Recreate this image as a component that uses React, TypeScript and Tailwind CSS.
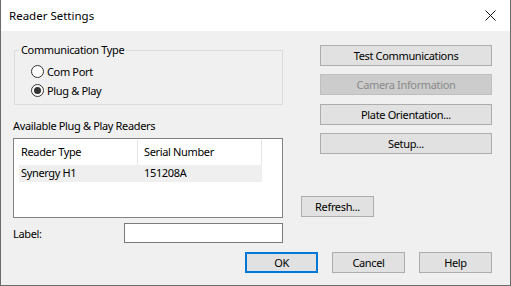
import React from "react";

const font = { fontFamily: '"Noto Sans", "Segoe UI", sans-serif' };

function Btn({ children, className = "", disabled = false }: { children: React.ReactNode; className?: string; disabled?: boolean }) {
  return (
    <div
      className={
        "flex h-[21px] items-center justify-center border text-[11px] leading-none tracking-[-0.35px] " +
        (disabled
          ? "border-[#bfbfbf] bg-[#cccccc] text-[#8a8a8a] "
          : "border-[#adadad] bg-[#e1e1e1] text-black ") +
        className
      }
    >
      {children}
    </div>
  );
}

function Radio({ checked, label }: { checked?: boolean; label: string }) {
  return (
    <div className="flex h-[19px] items-center gap-[3px]">
      <div className="flex h-[13px] w-[13px] items-center justify-center rounded-full border border-[#333333] bg-white">
        {checked && <div className="h-[7px] w-[7px] rounded-full bg-[#333333]" />}
      </div>
      <span className="text-[11px] leading-none tracking-[-0.35px]">{label}</span>
    </div>
  );
}

export default function App() {
  return (
    <div style={font} className="flex h-[286px] w-[511px] flex-col border-x border-b border-[#6b6b6b] bg-[#f0f0f0] text-black">
      <div className="flex h-[31px] items-center justify-between bg-white pl-[8px] pr-[10px]">
        <span className="text-[11.5px] leading-none">Reader Settings</span>
        <svg width="11" height="11" viewBox="0 0 11 11" className="mr-[4px]">
          <path d="M0.5 0.5 L10.5 10.5 M10.5 0.5 L0.5 10.5" stroke="#111" strokeWidth="1" />
        </svg>
      </div>
      <div className="flex flex-col text-[11px] tracking-[-0.35px]">
        <div className="flex">
          <div className="ml-[12px] flex w-[270px] flex-col">
            <fieldset className="ml-[1px] mt-[11px] h-[63px] border border-[#dcdcdc]">
              <legend className="ml-[4px] px-[2px] text-[11px] leading-[16px]">Communication Type</legend>
              <div className="pb-[3px] pl-[16px] pt-[4px]">
                <Radio label="Com Port" />
                <Radio label="Plug & Play" checked />
              </div>
            </fieldset>
            <div className="mt-[13px] leading-[16px]">Available Plug &amp; Play Readers</div>
            <div className="mt-[4px] h-[80px] border border-[#828282] bg-white px-[5px] pt-[1px]">
              <div className="flex h-[25px] w-[243px] items-center">
                <div className="flex h-full w-[119px] items-center border-r border-[#e5e5e5] pl-[2px]">Reader Type</div>
                <div className="flex h-full flex-1 items-center border-r border-[#e5e5e5] pl-[6px]">Serial Number</div>
              </div>
              <div className="flex h-[17px] w-[243px] items-center bg-[#efefef]">
                <div className="w-[119px] pl-[2px]">Synergy H1</div>
                <div className="pl-[6px]">151208A</div>
              </div>
            </div>
            <div className="mt-[5px] flex items-center">
              <span className="w-[111px] pt-[2px]">Label:</span>
              <div className="h-[20px] w-[159px] border border-[#7a7a7a] bg-white" />
            </div>
          </div>
          <div className="ml-[18px] flex w-[191px] flex-col">
            <Btn className="mt-[14px] ml-[19px]">Test Communications</Btn>
            <Btn className="mt-[8px] ml-[19px]" disabled>Camera Information</Btn>
            <Btn className="mt-[9px] ml-[19px]">Plate Orientation...</Btn>
            <Btn className="mt-[8px] ml-[19px]">Setup...</Btn>
            <Btn className="mt-[42px] w-[73px]">Refresh...</Btn>
          </div>
        </div>
        <div className="mt-[9px] flex justify-end gap-[14px] pr-[18px]">
          <div className="flex h-[21px] w-[73px] items-center justify-center border-2 border-[#0078d7] bg-[#e1e1e1] leading-none">OK</div>
          <Btn className="w-[73px]">Cancel</Btn>
          <Btn className="w-[73px]">Help</Btn>
        </div>
      </div>
    </div>
  );
}
